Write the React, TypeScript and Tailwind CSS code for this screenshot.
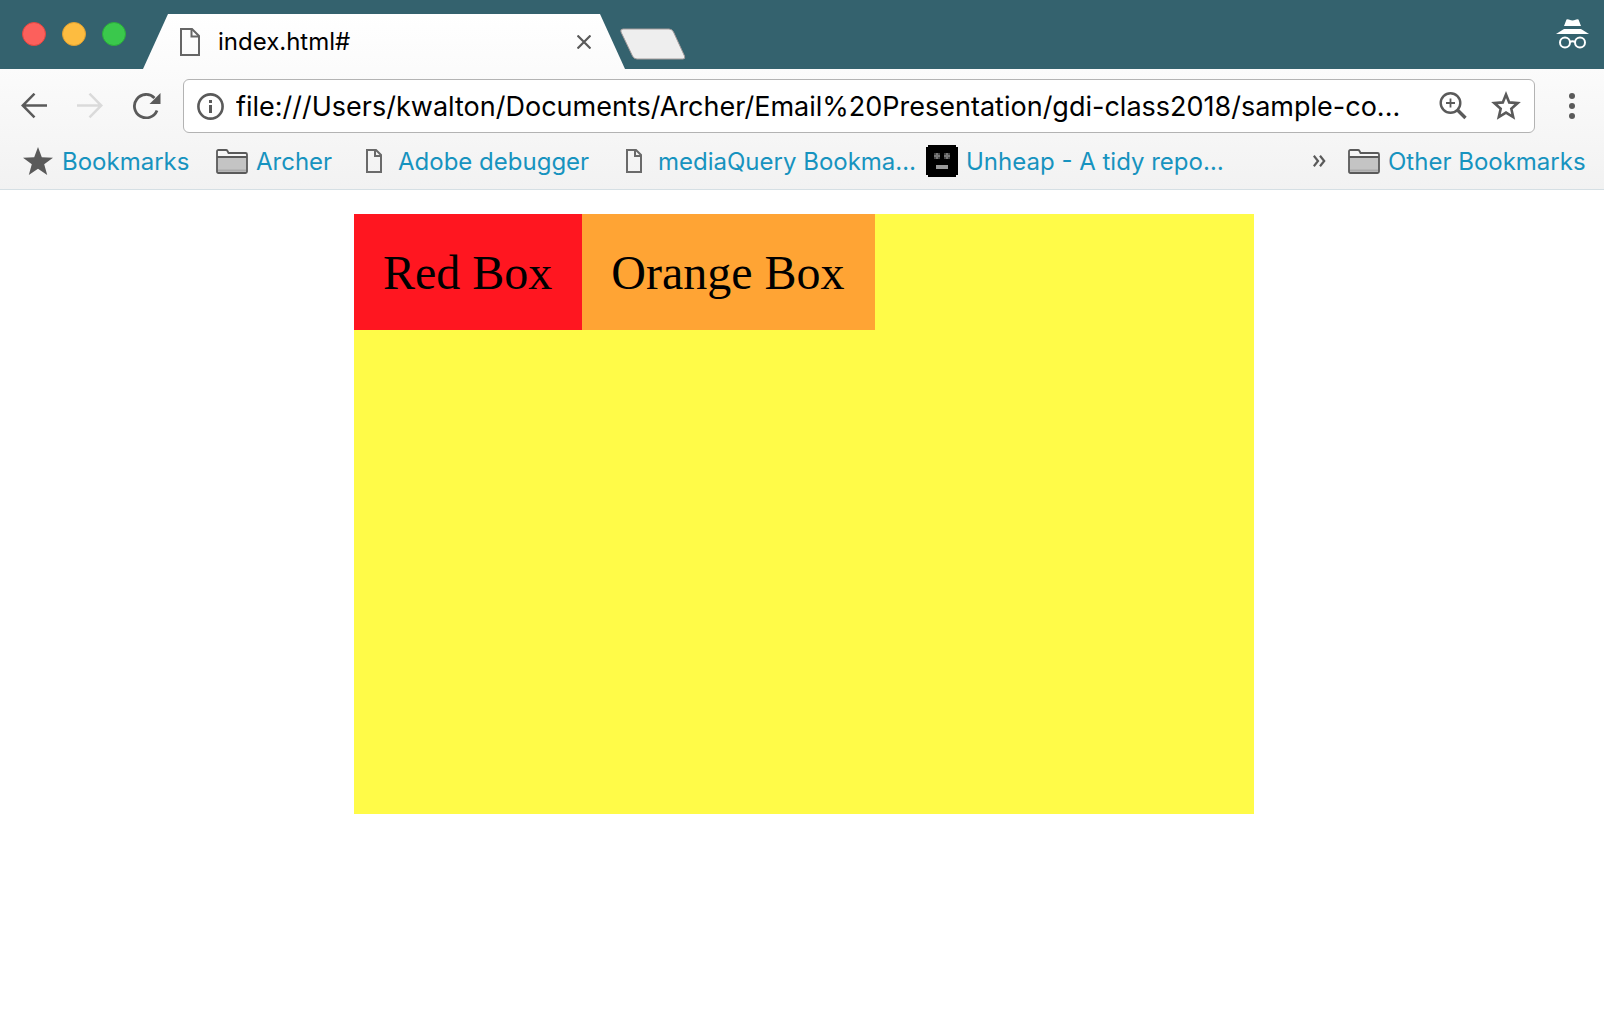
import React from "react";

const ink = "#5a5a5a";

function FileIcon({ className }: { className: string }) {
  return (
    <svg className={className} viewBox="0 0 20 28" fill="none" stroke="#666" strokeWidth="2" aria-hidden="true">
      <path d="M1 1H12L19 8V27H1Z" />
      <path d="M11.500 1V8.500H19" />
    </svg>
  );
}

function SmallFileIcon() {
  return (
    <svg className="h-6 w-4 shrink-0" viewBox="0 0 16 24" fill="none" stroke="#6a6a6a" strokeWidth="2" aria-hidden="true">
      <path d="M1 1H10L15 6V23H1Z" />
      <path d="M9 1V7H15" />
    </svg>
  );
}

function FolderIcon() {
  return (
    <svg className="h-[25px] w-8 shrink-0" viewBox="0 0 32 25" aria-hidden="true">
      <path d="M1 22.500V2.500Q1 1 2.500 1H10Q11 1 11.500 2L12.500 4H29.500Q31 4 31 5.500V22.500Q31 24 29.500 24H2.500Q1 24 1 22.500Z" fill="#f6f6f6" />
      <path d="M1 8H31V24H1Z" fill="#c4c4c4" />
      <path d="M2 21.500H30" stroke="#aaa" strokeWidth="2" />
      <path d="M1 8H31M1 22.500V2.500Q1 1 2.500 1H10Q11 1 11.500 2L12.500 4H29.500Q31 4 31 5.500V22.500Q31 24 29.500 24H2.500Q1 24 1 22.500Z" fill="none" stroke={ink} strokeWidth="1.800" />
    </svg>
  );
}

function FaceIcon() {
  return (
    <svg className="size-8 shrink-0" viewBox="0 0 32 32" aria-hidden="true">
      <path d="M2 0H30V2H32V30H30V32H2V30H0V2H2Z" fill="#000" />
      <path d="M8 8H14V14H8ZM18 8H24V14H18Z" fill="#444" />
      <path d="M10 8H12V14H10ZM8 10H14V12H8ZM20 8H22V14H20ZM18 10H24V12H18Z" fill="#777" />
      <path d="M10 20H22V24H10Z" fill="#999" />
    </svg>
  );
}

function Bookmark({ icon, label, className }: { icon: React.ReactNode; label: string; className: string }) {
  return (
    <a href="#" className={`flex shrink-0 items-center whitespace-nowrap ${className}`}>
      {icon}
      <span className="pt-0.5">{label}</span>
    </a>
  );
}

export default function App() {
  return (
    <div className="min-h-screen bg-white font-['Inter',sans-serif] text-black">
      <header>
        <div className="flex h-[69px] items-end bg-[#34626e]">
          <div className="flex w-[143px] shrink-0 items-start gap-4 self-stretch pt-[22px] pl-[22px]">
            <button aria-label="Close window" className="size-6 rounded-full border border-[#e2463f] bg-[#fc605c]" />
            <button aria-label="Minimize window" className="size-6 rounded-full border border-[#e0a030] bg-[#fdbc40]" />
            <button aria-label="Zoom window" className="size-6 rounded-full border border-[#2bac3a] bg-[#3ac84c]" />
          </div>
          <div className="flex h-[55px] w-[482px] items-center bg-linear-to-b from-white to-[#fbfbfb] pr-[34px] pl-[37px] [clip-path:polygon(25px_0,calc(100%-25px)_0,100%_100%,0_100%)]">
            <FileIcon className="h-7 w-5 shrink-0" />
            <span className="ml-[18px] flex-1 text-2xl">index.html#</span>
            <button aria-label="Close tab">
              <svg className="size-[14px]" viewBox="0 0 14 14" stroke={ink} strokeWidth="2.200" aria-hidden="true">
                <path d="M0.500 0.500L13.500 13.500M13.500 0.500L0.500 13.500" />
              </svg>
            </button>
          </div>
          <button aria-label="New tab" className="mb-[9px] -ml-[5px]">
            <svg className="h-8 w-[66px]" viewBox="0 0 66 32" aria-hidden="true">
              <path d="M3 1H49Q52 1 53.500 4L64.500 28Q65.500 31 63 31H17Q14 31 12.500 28L1 4Q0 1 3 1Z" fill="#eee" stroke="#a39b9b" strokeWidth="1" />
            </svg>
          </button>
          <svg className="mr-[15px] mb-5 ml-auto h-[30px] w-[33px]" viewBox="0 0 33 30" fill="#fff" role="img" aria-label="Incognito">
            <path d="M10.500 0.500Q12 -0.300 13.500 0.800Q16.500 2 19.500 0.800Q21 -0.300 22.500 0.500L25 7H8Z" />
            <path d="M8 10H25L33 15H0Z" />
            <g fill="none" stroke="#fff" strokeWidth="2">
              <circle cx="9" cy="23.500" r="5" />
              <circle cx="24" cy="23.500" r="5" />
              <path d="M14 23Q16.500 21.500 19 23" />
            </g>
          </svg>
        </div>

        <div className="border-b border-[#d5dfe4] bg-linear-to-b from-[#fbfbfb] to-[#f2f2f2]">
          <div className="flex items-center pt-[10px] pl-[21px]">
            <button aria-label="Back">
              <svg className="size-[26px]" viewBox="0 0 26 26" fill="none" stroke={ink} strokeWidth="2.500" aria-hidden="true">
                <path d="M26 12.500H2M13.500 0.700L1.700 12.500L13.500 24.300" />
              </svg>
            </button>
            <button aria-label="Forward" className="ml-[30px]">
              <svg className="size-[26px]" viewBox="0 0 26 26" fill="none" stroke="#dadada" strokeWidth="2.500" aria-hidden="true">
                <path d="M0 12.500H24M12.500 0.700L24.300 12.500L12.500 24.300" />
              </svg>
            </button>
            <button aria-label="Reload" className="ml-[30px]">
              <svg className="h-[26px] w-7" viewBox="0 0 28 26" aria-hidden="true">
                <path d="M24 17.500A11.700 11.700 0 1 1 21.500 5" fill="none" stroke={ink} strokeWidth="2.800" />
                <path d="M27.500 0V11H16.500Z" fill={ink} />
              </svg>
            </button>
            <div className="ml-[22px] flex h-[54px] flex-1 items-center rounded-md border border-[#b3b3b3] bg-white pr-[13px] pl-[13px]">
              <svg className="size-[27px] shrink-0" viewBox="0 0 27 27" fill="none" role="img" aria-label="Page information">
                <circle cx="13.500" cy="13.500" r="12.100" stroke={ink} strokeWidth="2.600" />
                <path d="M13.500 12V20M13.500 7V10" stroke={ink} strokeWidth="3" />
              </svg>
              <input
                aria-label="Address"
                className="ml-3 w-0 flex-1 bg-transparent pt-0.5 text-[27px] outline-none"
                defaultValue="file:///Users/kwalton/Documents/Archer/Email%20Presentation/gdi-class2018/sample-co..."
              />
              <button aria-label="Page zoom">
                <svg className="size-7" viewBox="0 0 28 28" fill="none" stroke={ink} aria-hidden="true">
                  <circle cx="11.500" cy="11" r="9.800" strokeWidth="2.400" />
                  <path d="M18.500 18L26.500 26" strokeWidth="3.400" />
                  <path d="M11.500 6.500V15.500M7 11H16" strokeWidth="1.800" />
                </svg>
              </button>
              <button aria-label="Bookmark this page" className="ml-6">
                <svg className="size-[30px]" viewBox="0 0 30 30" fill="none" stroke={ink} strokeWidth="2.600" aria-hidden="true">
                  <path d="M15 3.500L18.200 11.400L26.700 12.100L20.300 17.700L22.200 26L15 21.600L7.800 26L9.700 17.700L3.300 12.100L11.800 11.400Z" />
                </svg>
              </button>
            </div>
            <button aria-label="Menu" className="mr-7 ml-[33px]">
              <svg className="h-[26px] w-2" viewBox="0 0 8 26" fill={ink} aria-hidden="true">
                <circle cx="4" cy="3" r="3" />
                <circle cx="4" cy="13" r="3" />
                <circle cx="4" cy="23" r="3" />
              </svg>
            </button>
          </div>

          <nav aria-label="Bookmarks bar" className="flex h-14 items-center pr-[14px] pl-[23px] text-2xl text-[#1793bf]">
            <Bookmark
              className="w-[193px] gap-[9px]"
              label="Bookmarks"
              icon={
                <svg className="h-7 w-[30px] shrink-0" viewBox="0 0 30 28" fill={ink} aria-hidden="true">
                  <path d="M15 0L18.800 10.200L30 10.700L21.200 17.300L24.200 28L15 21.800L5.800 28L8.800 17.300L0 10.700L11.200 10.200Z" />
                </svg>
              }
            />
            <Bookmark className="w-[150px] gap-2" label="Archer" icon={<FolderIcon />} />
            <Bookmark className="w-[260px] gap-4" label="Adobe debugger" icon={<SmallFileIcon />} />
            <Bookmark className="w-[300px] gap-4" label="mediaQuery Bookma…" icon={<SmallFileIcon />} />
            <Bookmark className="gap-2" label="Unheap - A tidy repo…" icon={<FaceIcon />} />
            <button aria-label="More bookmarks" className="mr-[22px] ml-auto">
              <svg className="h-3 w-[13px]" viewBox="0 0 13 12" fill="none" stroke={ink} strokeWidth="2.200" aria-hidden="true">
                <path d="M0.800 0.800L5 6L0.800 11.200M7 0.800L11.200 6L7 11.200" />
              </svg>
            </button>
            <Bookmark className="w-[242px] gap-2" label="Other Bookmarks" icon={<FolderIcon />} />
          </nav>
        </div>
      </header>

      <main className="pt-6 pb-6 pl-1 font-['Liberation_Serif',serif] text-5xl">
        <div className="mx-auto flex min-h-[600px] max-w-[900px] items-start bg-[#fffb48]">
          <div className="bg-[#ff1620] pt-[31px] pr-[30px] pb-[29px] pl-[29px] leading-[56px]">Red Box</div>
          <div className="bg-[#ffa434] pt-[31px] pr-[30px] pb-[29px] pl-[29px] leading-[56px]">Orange Box</div>
        </div>
      </main>
    </div>
  );
}
